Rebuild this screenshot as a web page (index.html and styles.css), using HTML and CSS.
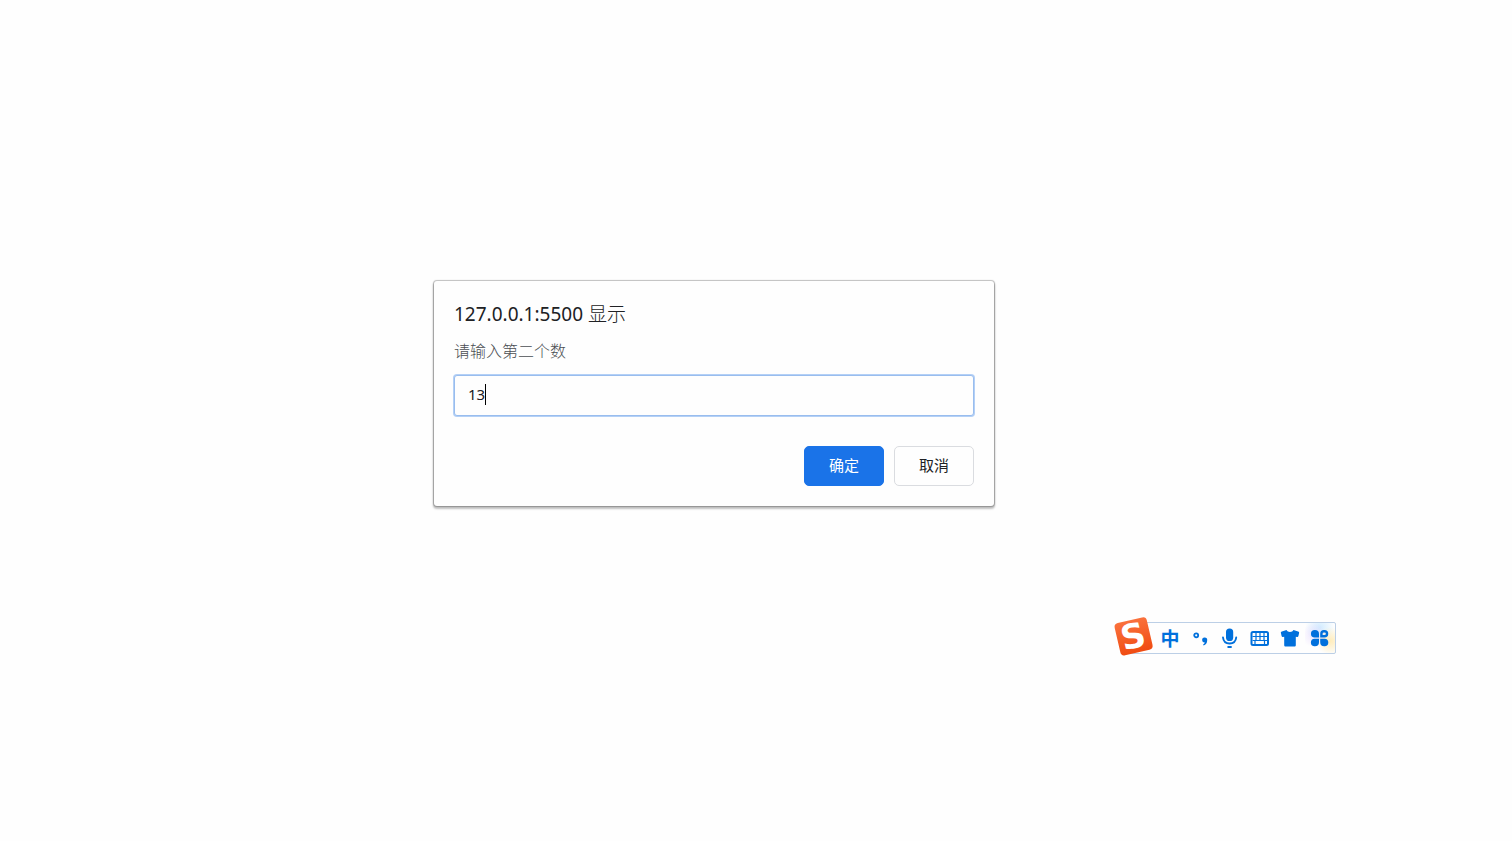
FILE: index.html
```html
<!DOCTYPE html>
<html lang="zh-CN">
<head>
<meta charset="utf-8">
<meta name="viewport" content="width=device-width, initial-scale=1">
<title>127.0.0.1:5500</title>
<link rel="stylesheet" href="styles.css">
</head>
<body>
<main class="desktop">
  <form class="dialog" role="dialog" aria-labelledby="dialog-title">
    <h1 class="dialog-title" id="dialog-title">127.0.0.1:5500 <span class="dialog-verb">显示</span></h1>
    <label class="dialog-label" for="answer">请输入第二个数</label>
    <div class="field">
      <input class="field-input" id="answer" type="text" value="13" autocomplete="off">
      <span class="caret" aria-hidden="true"></span>
    </div>
    <div class="actions">
      <button class="button button-primary" type="submit">确定</button>
      <button class="button" type="button">取消</button>
    </div>
  </form>

  <div class="ime" role="toolbar" aria-label="输入法">
    <svg class="ime-logo" viewBox="0 0 42 42" aria-hidden="true">
      <defs>
        <linearGradient id="logo-fill" x1="0" y1="0" x2="0" y2="1">
          <stop offset="0" stop-color="#fa713c"/>
          <stop offset="1" stop-color="#f04c12"/>
        </linearGradient>
      </defs>
      <g transform="rotate(-13 21 21)">
        <rect x="5" y="5" width="33" height="33" rx="4" fill="url(#logo-fill)"/>
        <text class="ime-logo-letter" x="21" y="33" text-anchor="middle">S</text>
      </g>
    </svg>
    <button class="ime-button ime-mode" type="button" aria-label="中文">中</button>
    <button class="ime-button" type="button" aria-label="标点">
      <svg class="icon" viewBox="0 0 20 20" aria-hidden="true">
        <circle cx="6.2" cy="7.3" r="2" fill="none" stroke="currentColor" stroke-width="1.8"/>
        <path d="M14.500 9.500a2.600 2.600 0 0 1 2.700 2.800c0 2.800-1.500 4.600-3.600 5.200l-.5-1c1-.5 1.600-1.200 1.700-2a2.500 2.500 0 1 1-.3-5z" fill="currentColor"/>
      </svg>
    </button>
    <button class="ime-button" type="button" aria-label="语音">
      <svg class="icon" viewBox="0 0 20 20" aria-hidden="true">
        <rect x="6" y="0.5" width="7.2" height="12.500" rx="3.600" fill="currentColor"/>
        <path d="M3 9.500c.4 3.900 3 6 6.600 6s6.200-2.100 6.600-6M8.200 19h2.800" fill="none" stroke="currentColor" stroke-width="1.900" stroke-linecap="round"/>
      </svg>
    </button>
    <button class="ime-button" type="button" aria-label="键盘">
      <svg class="icon" viewBox="0 0 20 20" aria-hidden="true">
        <rect x="1.500" y="4" width="16.500" height="13" rx="1.500" fill="none" stroke="currentColor" stroke-width="2"/>
        <path d="M2.500 8.500H17M2.500 12.500H17M6 5v7.500M10 5v7.500M14 5v7.500M5 12.500v4M14.500 12.500v4" fill="none" stroke="currentColor" stroke-width="1.200"/>
      </svg>
    </button>
    <button class="ime-button" type="button" aria-label="皮肤">
      <svg class="icon" viewBox="0 0 20 20" aria-hidden="true">
        <path d="M6.500 2c.6 1.300 1.900 2 3.500 2s2.900-.7 3.500-2l4.600 1.500c.8.300 1.200.8 1 1.600l-.7 3c-.2.700-.6 1-1.300.9l-1.300-.2V17c0 1-.5 1.600-1.500 1.600H5.700c-1 0-1.500-.6-1.500-1.600V8.800L2.900 9c-.7.100-1.100-.2-1.300-.9l-.7-3c-.2-.8.200-1.300 1-1.600z" fill="currentColor"/>
      </svg>
    </button>
    <button class="ime-button ime-tools" type="button" aria-label="工具箱">
      <svg class="icon" viewBox="0 0 20 20" aria-hidden="true">
        <path d="M4.700 2h.3a4 4 0 0 1 4 4v3.500H4.700a3.750 3.750 0 0 1 0-7.500zM4.700 10.700H9v3.600a4 4 0 0 1-4 4h-.3a3.800 3.800 0 0 1 0-7.600zM10.200 10.700h4.300a3.800 3.800 0 0 1 0 7.600h-.3a4 4 0 0 1-4-4z" fill="currentColor"/>
        <path d="M11.400 8.300V5.700a2.500 2.500 0 0 1 2.500-2.500h.6a2.550 2.550 0 0 1 0 5.100z" fill="none" stroke="currentColor" stroke-width="2.400"/>
      </svg>
    </button>
  </div>
</main>
</body>
</html>
```
FILE: styles.css
```css
* {
  box-sizing: border-box;
}

body {
  margin: 0;
  background: #fefefe;
  color: #202124;
  font-family: "Noto Sans", "Noto Sans CJK SC", sans-serif;
}

.desktop {
  position: relative;
  min-height: 100vh;
}

.dialog {
  position: absolute;
  top: 281px;
  left: 434px;
  display: flex;
  flex-direction: column;
  width: 560px;
  max-width: 100%;
  padding: 20px;
  border-radius: 3px;
  background: #fefefe;
  box-shadow: 0 0 1px 1px rgba(0, 0, 0, 0.24), 0 2px 2px 1px rgba(0, 0, 0, 0.24);
}

.dialog-title {
  margin: 0 0 12px;
  font-size: 19px;
  font-weight: 400;
  line-height: 26px;
}

.dialog-verb {
  font-weight: 300;
}

.dialog-label {
  margin-bottom: 12px;
  color: #4b4e53;
  font-size: 16px;
  font-weight: 300;
  line-height: 24px;
}

.field {
  position: relative;
  margin-bottom: 30px;
}

.field-input {
  display: block;
  width: 100%;
  height: 41px;
  padding: 0 13px 3px;
  border: 1px solid #99bdee;
  border-radius: 3px;
  outline: none;
  background: #fefefe;
  box-shadow: 0 0 0 1px #b4d0f6;
  color: #202124;
  font: 15px "Noto Sans", sans-serif;
}

.caret {
  position: absolute;
  top: 9px;
  left: 31px;
  width: 1px;
  height: 21px;
  background: #000;
}

.actions {
  display: flex;
  justify-content: flex-end;
  gap: 10px;
}

.button {
  width: 80px;
  height: 40px;
  padding: 0 0 3px;
  border: 1px solid #dadce0;
  border-radius: 5px;
  background: #fefefe;
  color: #202124;
  font: 15px "Noto Sans CJK SC", sans-serif;
}

.button-primary {
  border-color: #1a73e8;
  background: #1a73e8;
  color: #fff;
}

.ime {
  position: absolute;
  top: 622px;
  right: 176px;
  display: flex;
  align-items: center;
  height: 32px;
  padding-left: 28px;
  border: 1px solid #bccfe6;
  border-radius: 2px;
  background: #fefefe;
}

.ime-logo {
  position: absolute;
  top: -8px;
  left: -15px;
  width: 42px;
  height: 42px;
  overflow: visible;
}

.ime-logo-letter {
  fill: #fff;
  font: bold 34px/1 "DejaVu Sans", sans-serif;
}

.ime-button {
  display: flex;
  align-items: center;
  justify-content: center;
  width: 30px;
  height: 30px;
  padding: 0;
  border: 0;
  background: none;
  color: #0070dc;
}

.ime-mode {
  padding-bottom: 2px;
  font: bold 19px "Noto Sans CJK SC", sans-serif;
}

.ime-tools {
  background:
    radial-gradient(circle at 30% 40%, rgba(222, 205, 255, 0.5), transparent 45%),
    radial-gradient(circle at 85% 60%, rgba(255, 232, 170, 0.8), transparent 45%),
    radial-gradient(circle at 50% 15%, rgba(200, 232, 255, 0.8), transparent 50%);
}

.icon {
  width: 20px;
  height: 20px;
}
```
